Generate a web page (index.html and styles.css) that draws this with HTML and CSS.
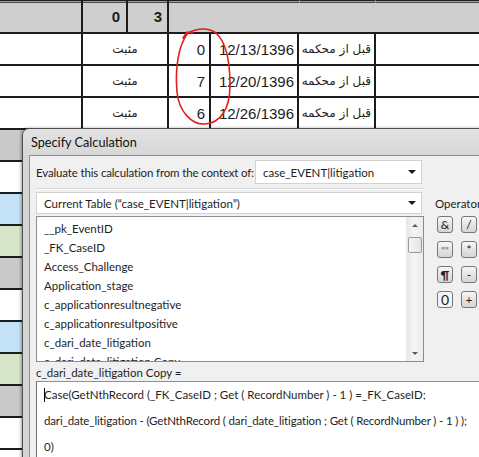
FILE: index.html
```html
<!DOCTYPE html>
<html>
<head>
<meta charset="utf-8">
<link rel="stylesheet" href="styles.css">
</head>
<body>
<div class="page">
  <div class="sheet">
    <div class="row head">
      <div class="c c1"></div>
      <div class="c ha">0</div>
      <div class="c hb">3</div>
      <div class="c hrest"><span class="tick t1"></span><span class="tick t2"></span></div>
    </div>
    <div class="row">
      <div class="c c1"></div>
      <div class="c c2 fa">مثبت</div>
      <div class="c c3">0</div>
      <div class="c c4">12/13/1396</div>
      <div class="c c5 fa">قبل از محکمه</div>
      <div class="c c6"></div>
    </div>
    <div class="row">
      <div class="c c1"></div>
      <div class="c c2 fa">مثبت</div>
      <div class="c c3">7</div>
      <div class="c c4">12/20/1396</div>
      <div class="c c5 fa">قبل از محکمه</div>
      <div class="c c6"></div>
    </div>
    <div class="row">
      <div class="c c1"></div>
      <div class="c c2 fa">مثبت</div>
      <div class="c c3">6</div>
      <div class="c c4">12/26/1396</div>
      <div class="c c5 fa">قبل از محکمه</div>
      <div class="c c6"></div>
    </div>
    <div class="row gray"><div class="c c1"></div></div>
    <div class="row white"><div class="c c1"></div></div>
    <div class="row blue"><div class="c c1"></div></div>
    <div class="row green"><div class="c c1"></div></div>
    <div class="row gray"><div class="c c1"></div></div>
    <div class="row white"><div class="c c1"></div></div>
    <div class="row blue"><div class="c c1"></div></div>
    <div class="row green"><div class="c c1"></div></div>
    <div class="row gray"><div class="c c1"></div></div>
    <div class="row white"><div class="c c1"></div></div>
  </div>

  <svg class="scribble" width="479" height="457" viewBox="0 0 479 457">
    <path d="M188 33 C178 45 175 70 177 92 C179 112 192 125 205 124 C220 123 230 110 230 85 C230 60 226 42 216 33 C208 27 196 28 186 34 M183 38 L187 32 L193 33" fill="none" stroke="#e0201c" stroke-width="1.6" stroke-linecap="round"/>
  </svg>

  <div class="dialog">
    <div class="title">Specify Calculation</div>
    <div class="client">
      <div class="ctx">
        <span class="lbl">Evaluate this calculation from the context of:</span>
        <div class="select ctx-sel">case_EVENT|litigation<span class="arrow"></span></div>
      </div>
      <div class="sep"></div>
      <div class="select cur-sel">Current Table (“case_EVENT|litigation”)<span class="arrow"></span></div>
      <div class="oplabel">Operator</div>
      <div class="list">
        <div class="items">
          <div class="item">__pk_EventID</div>
          <div class="item">_FK_CaseID</div>
          <div class="item">Access_Challenge</div>
          <div class="item">Application_stage</div>
          <div class="item">c_applicationresultnegative</div>
          <div class="item">c_applicationresultpositive</div>
          <div class="item">c_dari_date_litigation</div>
          <div class="item">c_dari_date_litigation Copy</div>
        </div>
        <div class="scrollbar">
          <span class="up"></span>
          <span class="thumb"></span>
          <span class="down"></span>
        </div>
      </div>
      <div class="ops">
        <div class="btn">&amp;</div>
        <div class="btn">/</div>
        <div class="btn q">""</div>
        <div class="btn">*</div>
        <div class="btn b">¶</div>
        <div class="btn">-</div>
        <div class="btn zero">0</div>
        <div class="btn">+</div>
      </div>
      <div class="fname">c_dari_date_litigation Copy =</div>
      <div class="formula">
        <div class="line"><span class="caret"></span>Case(GetNthRecord (_FK_CaseID ; Get ( RecordNumber ) - 1 ) =_FK_CaseID;</div>
        <div class="line l2">dari_date_litigation - (GetNthRecord ( dari_date_litigation ; Get ( RecordNumber ) - 1 ) );</div>
        <div class="line">0)</div>
      </div>
    </div>
  </div>
</div>
</body>
</html>
```

FILE: styles.css
```css
* { box-sizing: border-box; }
html, body { margin: 0; padding: 0; background: #fff; }
.page { position: relative; width: 479px; height: 457px; overflow: hidden; background: #fff; }

/* background spreadsheet */
.sheet { font-family: "Liberation Sans", Arial, sans-serif; font-size: 15px; color: #1c1c1c; }
.row { display: flex; height: 32px; border-bottom: 2px solid #1c1c1c; background: #fff; }
.row.head { height: 34px; background: #cfcfcf; box-shadow: inset 0 1px 0 #1e1e1e, inset 0 2px 0 #9c9c9c, inset 0 3px 0 #4a4a4a; }
.row.gray { background: #c9c9c9; }
.row.white { background: #fff; }
.row.blue { background: #c4e2f5; }
.row.green { background: #d6e5c7; }
.c { display: flex; align-items: center; border-right: 2px solid #1c1c1c; height: 100%; }
.c1 { width: 83px; }
.ha { width: 45px; justify-content: flex-end; padding-right: 6px; font-weight: bold; }
.hb { width: 41px; justify-content: flex-end; padding-right: 5px; font-weight: bold; }
.hrest { flex: 1; border-right: none; position: relative; }
.tick { position: absolute; top: 0; width: 1px; height: 3px; background: #8a8a8a; }
.t1 { left: 130px; }
.t2 { left: 206px; }
.c2 { width: 86px; justify-content: center; }
.c3 { width: 42px; justify-content: flex-end; padding-right: 4px; }
.c4 { width: 88px; justify-content: flex-end; padding-right: 3px; }
.c5 { width: 77px; padding-right: 3px; direction: rtl; justify-content: flex-start; }
.c6 { flex: 1; border-right: none; }
.fa { font-family: "DejaVu Sans", sans-serif; font-size: 12px; }

.scribble { position: absolute; left: 0; top: 0; pointer-events: none; }

/* dialog window */
.dialog {
  position: absolute; left: 22px; top: 128px; width: 490px; height: 340px;
  background: linear-gradient(#e2e2e2, #d6d6d6 30px, #d4d4d4);
  border: 1px solid #4f4f4f; border-radius: 7px 0 0 0;
  padding-left: 6px;
  box-shadow: -1px 0 3px rgba(0,0,0,0.35);
  font-family: Lato, "Liberation Sans", sans-serif; font-size: 11.5px; color: #1e1e1e;
}
.title { height: 26px; display: flex; align-items: center; padding-left: 2px; font-size: 12.7px; color: #111; }
.client {
  height: 320px; background: #f0f0f0; border: 1px solid #8e8e8e; border-right: none;
  padding: 4px 0 0 6px;
  display: grid; grid-template-columns: 388px 1fr; column-gap: 11px;
  grid-template-rows: 24px 8px 22px 150px 17px 1fr;
}
.ctx { grid-column: 1; grid-row: 1; display: flex; align-items: center; justify-content: space-between; padding-right: 2px; }
.lbl { white-space: nowrap; letter-spacing: -0.15px; }
.select { position: relative; background: #fff; border: 1px solid #d2d2d2; display: flex; align-items: center; padding-left: 7px; white-space: nowrap; }
.ctx-sel { width: 167px; height: 24px; flex: none; }
.cur-sel { grid-column: 1; grid-row: 3; width: 386px; height: 22px; }
.arrow { position: absolute; right: 5px; top: 50%; margin-top: -2px; border-left: 4px solid transparent; border-right: 4px solid transparent; border-top: 4px solid #1a1a1a; }
.sep { grid-column: 1; grid-row: 2; align-self: center; height: 1px; background: #d9d9d9; box-shadow: 0 1px 0 #fff; }
.oplabel { grid-column: 2; grid-row: 3; align-self: center; white-space: nowrap; }

.list { grid-column: 1; grid-row: 4; margin-top: 2px; height: 146px; background: #fff; border: 1px solid #8d8d8d; display: flex; overflow: hidden; }
.items { flex: 1; padding: 2px 0 0 7px; overflow: hidden; }
.item { height: 19px; line-height: 19px; white-space: nowrap; }
.scrollbar { width: 17px; position: relative; background: linear-gradient(90deg, #e6e6e6, #f4f4f4 40%, #ececec); border-left: 1px solid #e8e8e8; }
.up, .down { position: absolute; left: 5px; border-left: 3px solid transparent; border-right: 3px solid transparent; }
.up { top: 7px; border-bottom: 3px solid #5a5a5a; }
.down { bottom: 6px; border-top: 3px solid #5a5a5a; }
.thumb { position: absolute; left: 1px; top: 20px; width: 14px; height: 16px; border: 1px solid #9a9a9a; border-radius: 2px; background: linear-gradient(90deg, #f6f6f6, #e4e4e4); }

.ops { grid-column: 2; grid-row: 4 / 6; padding: 2px 0 0 2px; display: grid; grid-template-columns: 16px 16px; column-gap: 8px; row-gap: 8px; grid-auto-rows: 17px; align-content: start; }
.btn { border: 1px solid #777; border-radius: 3px; background: linear-gradient(#f7f7f7, #e2e2e2 55%, #d6d6d6); display: flex; align-items: center; justify-content: center; font-size: 12px; color: #222; line-height: 1; }
.btn.q { font-size: 10px; color: #666; }
.btn.b { font-weight: bold; }
.btn.zero { font-size: 14px; background: #f4f4f4; }

.fname { grid-column: 1 / 3; grid-row: 5; display: flex; align-items: center; white-space: nowrap; }
.formula { grid-column: 1 / 3; grid-row: 6; background: #fff; border-top: 1px solid #7f93aa; border-left: 1px solid #6d6d6d; padding-left: 7px; }
.line { height: 26px; line-height: 26px; white-space: nowrap; }
.l2 { letter-spacing: -0.15px; }
.caret { display: inline-block; width: 1px; height: 14px; background: #000; vertical-align: -3px; margin-right: -1px; }
```
